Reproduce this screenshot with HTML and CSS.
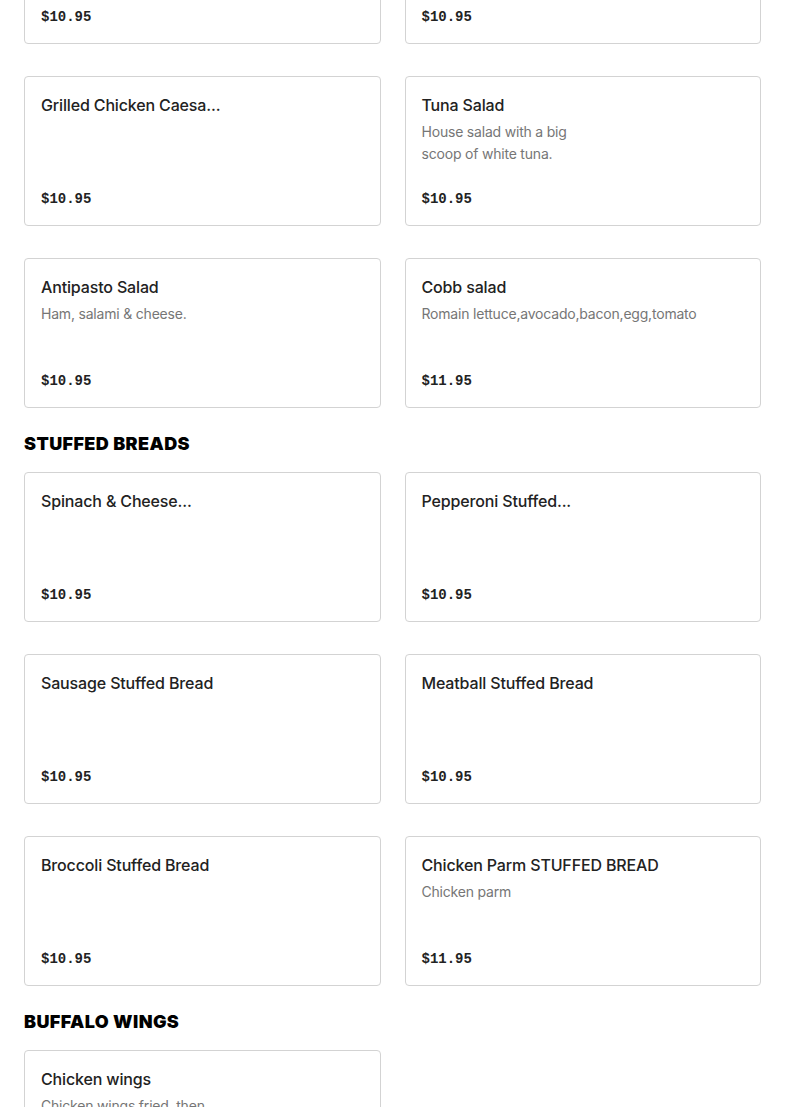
FILE: index.html
```html
<!DOCTYPE html>
<html lang="en">
<head>
    <meta charset="UTF-8">
    <meta name="viewport" content="width=device-width, initial-scale=1.0">
    <title>Menu</title>
    <link rel="stylesheet" href="styles.css">
</head>
<body>
    <main class="menu">
        <section class="category">
            <div class="grid">
                <div class="card">
                    <div class="name">House Salad</div>
                    <div class="price">$10.95</div>
                </div>
                <div class="card">
                    <div class="name">Chef Salad</div>
                    <div class="price">$10.95</div>
                </div>
                <div class="card">
                    <div class="name">Grilled Chicken Caesa...</div>
                    <div class="price">$10.95</div>
                </div>
                <div class="card">
                    <div class="name">Tuna Salad</div>
                    <div class="desc">House salad with a big<br>scoop of white tuna.</div>
                    <div class="price">$10.95</div>
                </div>
                <div class="card">
                    <div class="name">Antipasto Salad</div>
                    <div class="desc">Ham, salami &amp; cheese.</div>
                    <div class="price">$10.95</div>
                </div>
                <div class="card">
                    <div class="name">Cobb salad</div>
                    <div class="desc">Romain lettuce,avocado,bacon,egg,tomato</div>
                    <div class="price">$11.95</div>
                </div>
            </div>
        </section>

        <section class="category">
            <h2>STUFFED BREADS</h2>
            <div class="grid">
                <div class="card">
                    <div class="name">Spinach &amp; Cheese...</div>
                    <div class="price">$10.95</div>
                </div>
                <div class="card">
                    <div class="name">Pepperoni Stuffed...</div>
                    <div class="price">$10.95</div>
                </div>
                <div class="card">
                    <div class="name">Sausage Stuffed Bread</div>
                    <div class="price">$10.95</div>
                </div>
                <div class="card">
                    <div class="name">Meatball Stuffed Bread</div>
                    <div class="price">$10.95</div>
                </div>
                <div class="card">
                    <div class="name">Broccoli Stuffed Bread</div>
                    <div class="price">$10.95</div>
                </div>
                <div class="card">
                    <div class="name">Chicken Parm STUFFED BREAD</div>
                    <div class="desc">Chicken parm</div>
                    <div class="price">$11.95</div>
                </div>
            </div>
        </section>

        <section class="category">
            <h2>BUFFALO WINGS</h2>
            <div class="grid">
                <div class="card">
                    <div class="name">Chicken wings</div>
                    <div class="desc">Chicken wings fried, then<br>tossed in buffalo sauce.</div>
                    <div class="price">$12.95</div>
                </div>
            </div>
        </section>
    </main>
</body>
</html>
```

FILE: styles.css
```css
/* Page */
body {
    margin: 0;
    background: #fff;
    color: #222;
    font-family: Inter, "Noto Sans", sans-serif;
}

/* the screenshot is scrolled part way down the menu */
.menu {
    padding: 0 24px;
    margin-top: -106px;
}

.category h2 {
    margin: 25px 0 17px;
    font-size: 18px;
    line-height: 22px;
    font-weight: 900;
    color: #000;
    letter-spacing: 0.4px;
}

.grid {
    display: grid;
    grid-template-columns: 1fr 1fr;
    column-gap: 24px;
    row-gap: 32px;
}

/* Item card */
.card {
    display: flex;
    flex-direction: column;
    height: 150px;
    box-sizing: border-box;
    padding: 16px;
    border: 1px solid #d3d3d3;
    border-radius: 4px;
    background: #fff;
}

.name {
    font-size: 16px;
    line-height: 24px;
    font-weight: 500;
    color: #222;
    letter-spacing: -0.15px;
}

.desc {
    margin-top: 4px;
    font-size: 14px;
    line-height: 22px;
    color: #767676;
    letter-spacing: -0.2px;
}

.price {
    margin-top: auto;
    font-family: "Liberation Mono", monospace;
    font-size: 14px;
    line-height: 20px;
    font-weight: bold;
    color: #222;
}
```
